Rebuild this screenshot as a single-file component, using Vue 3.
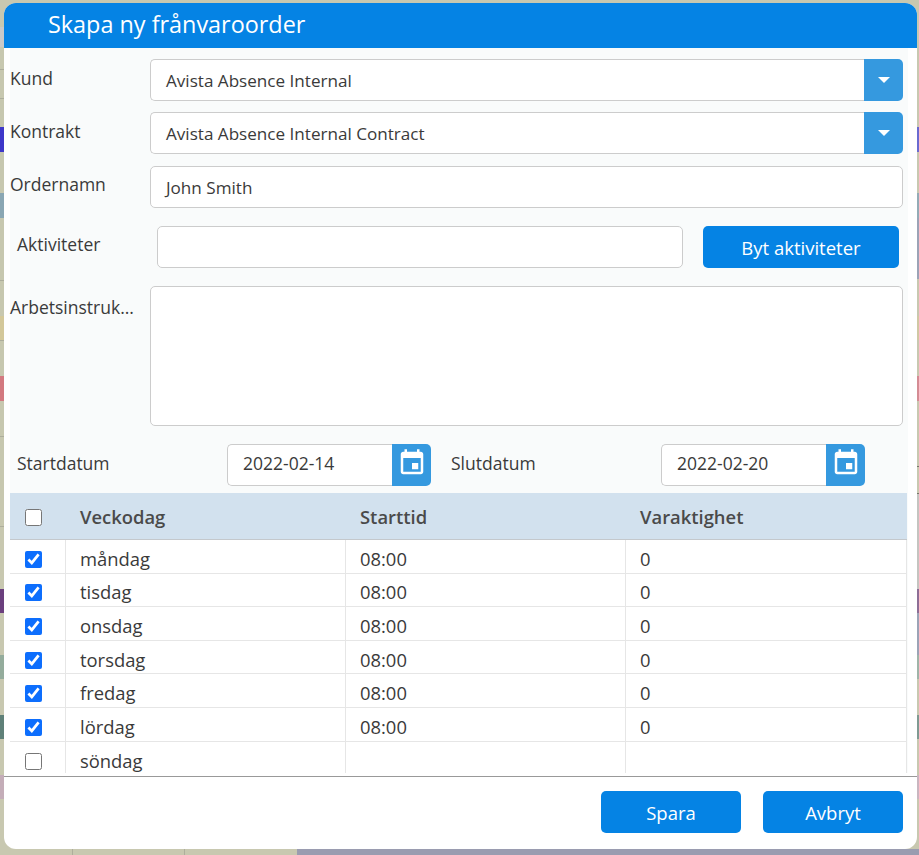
<template>
  <div class="page">
    <!-- what shows of the calendar behind the dialog -->
    <div class="behind">
      <span v-for="(b, i) in behindBlocks" :key="i" class="block" :style="blockStyle(b)"></span>
    </div>

    <div class="modal">
      <div class="modal-header">Skapa ny frånvaroorder</div>

      <div class="modal-body">
        <div class="row row-first">
          <label class="label">Kund</label>
          <div class="select">
            <div class="field">Avista Absence Internal</div>
            <div class="caret"><span class="triangle"></span></div>
          </div>
        </div>
        <div class="row row-second">
          <label class="label">Kontrakt</label>
          <div class="select">
            <div class="field">Avista Absence Internal Contract</div>
            <div class="caret"><span class="triangle"></span></div>
          </div>
        </div>
        <div class="row row-third">
          <label class="label up">Ordernamn</label>
          <div class="field alone">John Smith</div>
        </div>

        <div class="row row-activities">
          <label class="label up">Aktiviteter</label>
          <div class="field activities"></div>
          <button class="btn change">Byt aktiviteter</button>
        </div>

        <div class="row row-text">
          <label class="label down">Arbetsinstruk...</label>
          <div class="field area"></div>
        </div>

        <div class="row row-dates">
          <label class="label date-label">Startdatum</label>
          <div class="date">
            <div class="field date-field">2022-02-14</div>
            <div class="cal">
              <svg width="30" height="30" viewBox="0 0 24 24"><path fill="#fff" d="M19 3h-1V1h-2v2H8V1H6v2H5c-1.100 0-2 .9-2 2v14c0 1.100.9 2 2 2h14c1.100 0 2-.9 2-2V5c0-1.100-.9-2-2-2zm0 16H5V8h14v11zM12 12h5v5h-5z" /></svg>
            </div>
          </div>
          <label class="label date-label second">Slutdatum</label>
          <div class="date">
            <div class="field date-field">2022-02-20</div>
            <div class="cal">
              <svg width="30" height="30" viewBox="0 0 24 24"><path fill="#fff" d="M19 3h-1V1h-2v2H8V1H6v2H5c-1.100 0-2 .9-2 2v14c0 1.100.9 2 2 2h14c1.100 0 2-.9 2-2V5c0-1.100-.9-2-2-2zm0 16H5V8h14v11zM12 12h5v5h-5z" /></svg>
            </div>
          </div>
        </div>

        <div class="table">
          <div class="thead">
            <div class="cell check"><input type="checkbox" /></div>
            <div class="cell day">Veckodag</div>
            <div class="cell time">Starttid</div>
            <div class="cell dur">Varaktighet</div>
          </div>
          <div v-for="d in days" :key="d.name" class="tr">
            <div class="cell check"><input type="checkbox" :checked="d.on" /></div>
            <div class="cell day">{{ d.name }}</div>
            <div class="cell time">{{ d.on ? "08:00" : "" }}</div>
            <div class="cell dur">{{ d.on ? "0" : "" }}</div>
          </div>
        </div>
      </div>

      <div class="modal-footer">
        <button class="btn foot">Spara</button>
        <button class="btn foot">Avbryt</button>
      </div>
    </div>
  </div>
</template>

<script setup>
const days = [
  { name: "måndag", on: true },
  { name: "tisdag", on: true },
  { name: "onsdag", on: true },
  { name: "torsdag", on: true },
  { name: "fredag", on: true },
  { name: "lördag", on: true },
  { name: "söndag", on: false },
];

// [left, top, width, height, colour]
const behindBlocks = [
  [0, 27, 4, 20, "#c9c9c9"],
  [0, 69, 4, 1, "#aeae9c"],
  [0, 98, 4, 1, "#aeae9c"],
  [0, 127, 4, 25, "#3f38c9"],
  [0, 193, 4, 25, "#8ba7b4"],
  [0, 280, 4, 1, "#aeae9c"],
  [0, 316, 4, 24, "#d4c89a"],
  [0, 340, 4, 1, "#aeae9c"],
  [0, 376, 4, 25, "#d47a80"],
  [0, 436, 4, 1, "#aeae9c"],
  [0, 526, 4, 1, "#aeae9c"],
  [0, 589, 4, 24, "#6b3f7e"],
  [0, 655, 4, 24, "#94ac9c"],
  [0, 715, 4, 24, "#5f8078"],
  [0, 775, 4, 24, "#c4adb8"],

  [917, 127, 2, 25, "#6a6ad0"],
  [917, 193, 2, 25, "#93abb6"],
  [917, 218, 2, 61, "#9ba3b6"],
  [917, 316, 2, 24, "#d0c8a4"],
  [917, 376, 2, 25, "#d48c94"],
  [917, 466, 2, 1, "#77776c"],
  [917, 493, 2, 1, "#77776c"],
  [917, 494, 2, 95, "#c4c4c0"],
  [917, 589, 2, 24, "#8d6e96"],
  [917, 613, 2, 42, "#9ba3b6"],
  [917, 655, 2, 24, "#9fb4a8"],
  [917, 715, 2, 24, "#7f9a92"],
  [917, 775, 2, 24, "#c9b6c0"],

  [72, 849, 1, 6, "#aeae9c"],
  [184, 849, 1, 6, "#aeae9c"],
  [297, 849, 622, 6, "#9a9cb0"],
];

const blockStyle = ([left, top, width, height, background]) => ({
  left: left + "px",
  top: top + "px",
  width: width + "px",
  height: height + "px",
  background,
});
</script>

<style>
html, body {
  margin: 0;
  background: #c8c8b0;
}
</style>

<style scoped>
.page {
  width: 919px;
  height: 855px;
  position: relative;
  overflow: hidden;
  background: #c8c8b0;
  font-family: "Open Sans", "Noto Sans", sans-serif;
  font-size: 17.1px;
  color: #3a3a3a;
}

.block {
  position: absolute;
}

.modal {
  position: absolute;
  left: 4px;
  top: 3px;
  width: 913px;
  height: 846px;
  background: #fff;
  border-radius: 12px;
  overflow: hidden;
  display: flex;
  flex-direction: column;
}

.modal-header {
  height: 45px;
  flex: none;
  background: #0583e4;
  color: #fff;
  font-size: 23.4px;
  line-height: 42px;
  padding-left: 44px;
}

.modal-body {
  margin: 0 9px 0 6px;
  height: 725px;
  flex: none;
  background: #f9fbfb;
  padding-top: 11px;
  box-sizing: border-box;
}

.row {
  display: flex;
  align-items: flex-start;
}

.row-second {
  margin-top: 11px;
}

.row-third {
  margin-top: 12px;
}

.row-activities {
  margin-top: 18px;
  padding-left: 7px;
}

.row-text {
  margin-top: 18px;
}

.row-dates {
  margin-top: 18px;
  padding-left: 7px;
}

.label {
  width: 140px;
  flex: none;
  font-size: 17.5px;
  line-height: 22px;
  padding-top: 8px;
}

.label.up {
  padding-top: 7px;
}

.label.down {
  padding-top: 10px;
}

.select {
  width: 753px;
  display: flex;
}

.field {
  height: 42px;
  box-sizing: border-box;
  border: 1px solid #ccc;
  border-radius: 5px;
  background: #fff;
  padding: 0 15px;
  line-height: 42px;
}

.select .field {
  flex: 1;
  border-radius: 5px 0 0 5px;
  border-right: 0;
}

.caret {
  width: 39px;
  height: 42px;
  background: #3599df;
  border-radius: 0 5px 5px 0;
  display: flex;
  align-items: center;
  justify-content: center;
}

.triangle {
  width: 0;
  height: 0;
  border-left: 6.5px solid transparent;
  border-right: 6.5px solid transparent;
  border-top: 6.5px solid #fff;
}

.alone {
  width: 753px;
}

.activities {
  width: 526px;
}

.btn {
  border: 0;
  border-radius: 5px;
  background: #0583e4;
  color: #fff;
  font-family: inherit;
  font-size: 18.5px;
  height: 42px;
  padding: 0;
}

.change {
  width: 196px;
  margin-left: 20px;
  padding-top: 1px;
}

.area {
  width: 753px;
  height: 140px;
}

.date-label {
  width: 210px;
}

.date-label.second {
  margin-left: 20px;
}

.date {
  width: 204px;
  display: flex;
}

.date-field {
  flex: 1;
  font-size: 17.5px;
  border-radius: 5px 0 0 5px;
  border-right: 0;
  line-height: 36px;
}

.cal {
  width: 39px;
  height: 42px;
  background: #3599df;
  border-radius: 0 5px 5px 0;
  display: flex;
  align-items: center;
  justify-content: center;
}

.cal svg {
  margin-top: -4px;
}

.table {
  margin-top: 7px;
  width: 897px;
  height: 280px;
  overflow: hidden;
}

.thead {
  display: grid;
  grid-template-columns: 56px 280px 280px 281px;
  height: 47px;
  box-sizing: border-box;
  background: #d2e1ee;
  border-bottom: 1px solid #c4c8cc;
  font-weight: 600;
  color: #4a4a4a;
  font-size: 18.4px;
}

.thead .cell {
  border: 0;
}

.thead .check input {
  margin-top: 3px;
}

.tr {
  display: grid;
  grid-template-columns: 56px 280px 280px 281px;
  height: 33.6px;
  box-sizing: border-box;
  background: #fff;
  border-bottom: 1px solid #e6e6e6;
  font-size: 18.4px;
}

.tr:last-child {
  border-bottom: 0;
}

.cell {
  display: flex;
  align-items: center;
  padding-left: 14px;
  border-right: 1px solid #e6e6e6;
  box-sizing: border-box;
}

.tr .cell {
  padding-top: 4px;
}

.tr .check input {
  margin-top: 2px;
}

.check {
  padding-left: 15px;
}

.check input {
  width: 17px;
  height: 17px;
  margin: 0;
  accent-color: #0d6efd;
}

.modal-footer {
  flex: none;
  border-top: 1px solid #999;
  margin-top: 3px;
  padding: 14px 14px 0 0;
  display: flex;
  justify-content: flex-end;
  gap: 22px;
}

.foot {
  width: 140px;
}
</style>
